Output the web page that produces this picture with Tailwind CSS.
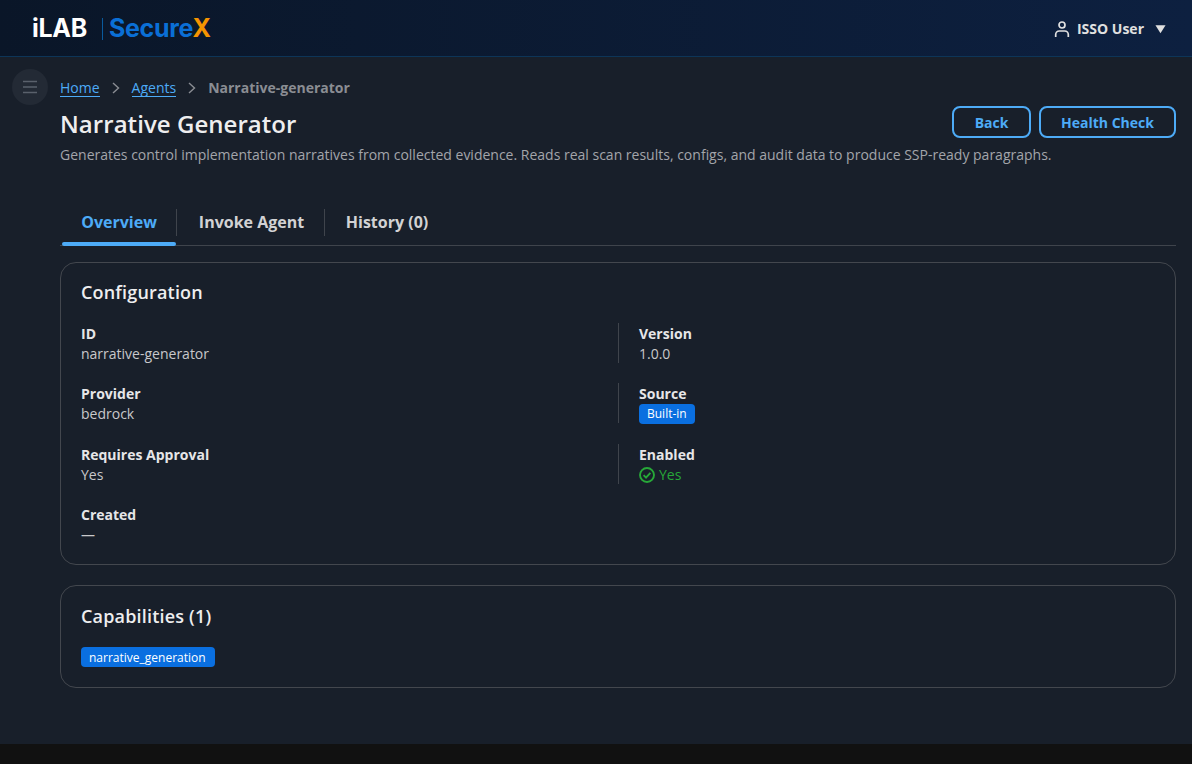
<!DOCTYPE html>
<html lang="en">
<head>
    <meta charset="UTF-8">
    <title>Narrative Generator</title>
    <script src="https://cdn.jsdelivr.net/npm/@tailwindcss/browser@4"></script>
</head>
<body class="relative h-[764px] w-[1192px] overflow-hidden bg-[#181f2a] font-['Open_Sans',sans-serif] text-sm text-[#e0e0e0]">
    <!-- Top bar -->
    <header class="flex h-[57px] items-center justify-between border-b border-[#0d3558] bg-gradient-to-r from-[#0a1628] to-[#0d2040] pl-8 pr-[26px] pt-[2px]">
        <div class="flex items-center font-['Inter',sans-serif] text-[25px] font-bold tracking-[-0.3px]">
            <span class="text-white">iLAB</span>
            <span class="ml-[15px] mr-[6px] h-[22px] w-px bg-[#0a5a9c]"></span>
            <span class="text-[#0a6fd6]">Secure<span class="text-[#f59400]">X</span></span>
        </div>
        <div class="flex items-center text-[#e0e0e0]">
            <svg class="h-[18px] w-[18px]" viewBox="0 0 18 18" fill="none" stroke="currentColor" stroke-width="1.7">
                <circle cx="9" cy="5" r="3"/>
                <path d="M2.7 17v-2.5a3.5 3.5 0 0 1 3.5-3.5h5.6a3.5 3.5 0 0 1 3.5 3.5V17"/>
            </svg>
            <span class="ml-[6px] font-bold">ISSO User</span>
            <svg class="ml-[11px] h-[10px] w-[11px]" viewBox="0 0 12 10" fill="currentColor"><path d="M0.5 1h11L6 9.5z"/></svg>
        </div>
    </header>

    <!-- Sidebar toggle -->
    <button class="absolute left-3 top-[69px] flex h-9 w-9 items-center justify-center rounded-full bg-[#232a35]">
        <svg class="h-4 w-4 text-[#5a616c]" viewBox="0 0 16 16" fill="none" stroke="currentColor" stroke-width="1.5">
            <path d="M1 2.5h14M1 8h14M1 13.5h14"/>
        </svg>
    </button>

    <main class="pl-[60px] pr-4">
        <nav class="mt-[20px] flex h-[21px] items-center">
            <a class="border-b border-[#4dabf7] leading-[17px] text-[#4dabf7]">Home</a>
            <svg class="mx-[12px] h-3 w-2 text-[#8a8d93]" viewBox="0 0 8 12" fill="none" stroke="currentColor" stroke-width="1.4"><path d="M1 1l5.5 5L1 11"/></svg>
            <a class="border-b border-[#4dabf7] leading-[17px] text-[#4dabf7]">Agents</a>
            <svg class="mx-[12px] h-3 w-2 text-[#8a8d93]" viewBox="0 0 8 12" fill="none" stroke="currentColor" stroke-width="1.4"><path d="M1 1l5.5 5L1 11"/></svg>
            <span class="font-bold text-[#8a8d93]">Narrative-generator</span>
        </nav>

        <div class="flex items-start justify-between">
            <h1 class="pt-[10px] text-2xl leading-[32px] font-semibold tracking-[0.05px] text-[#eeeeef]">Narrative Generator</h1>
            <div class="flex gap-2 pt-[8px]">
                <button class="h-8 w-[79px] rounded-lg border-2 border-[#4dabf7] pt-px font-bold text-[#4dabf7]">Back</button>
                <button class="h-8 w-[137px] rounded-lg border-2 border-[#4dabf7] pt-px font-bold text-[#4dabf7]">Health Check</button>
            </div>
        </div>
        <p class="mt-[5px] leading-5 text-[#a3a5aa]">Generates control implementation narratives from collected evidence. Reads real scan results, configs, and audit data to produce SSP-ready paragraphs.</p>

        <!-- Tabs -->
        <div class="mt-[36px] flex h-[45px] items-stretch border-b border-[#3f444c] text-base font-bold">
            <div class="relative ml-[2px] flex w-[114px] items-center justify-center pb-[2px] text-[#4dabf7]">
                Overview
                <span class="absolute -bottom-px left-0 right-0 h-[4px] rounded-full bg-[#4dabf7]"></span>
            </div>
            <div class="mb-[9px] mt-[8px] w-px bg-[#3f444c]"></div>
            <div class="flex w-[147px] items-center justify-center pb-[2px] pl-[2px] text-[#d2d2d4]">Invoke Agent</div>
            <div class="mb-[9px] mt-[8px] w-px bg-[#3f444c]"></div>
            <div class="flex w-[125px] items-center justify-center pb-[2px] pr-px text-[#d2d2d4]">History (0)</div>
        </div>

        <!-- Configuration -->
        <section class="mt-4 h-[303px] rounded-2xl border border-[#43474e] px-5 pt-[16px]">
            <h2 class="text-lg leading-[26px] font-semibold tracking-[0.18px] text-[#eeeeef]">Configuration</h2>
            <dl class="mt-[18px] grid grid-cols-2 gap-y-[20.4px]">
                <div class="h-10">
                    <dt class="h-5 leading-[22px] font-bold text-[#e6e6e8]">ID</dt>
                    <dd class="h-5 leading-[22px] text-[#c8c8ca]">narrative-generator</dd>
                </div>
                <div class="h-10 border-l border-[#3f444c] pl-5">
                    <dt class="h-5 leading-[22px] font-bold text-[#e6e6e8]">Version</dt>
                    <dd class="h-5 leading-[22px] text-[#c8c8ca]">1.0.0</dd>
                </div>
                <div class="h-10">
                    <dt class="h-5 leading-[22px] font-bold text-[#e6e6e8]">Provider</dt>
                    <dd class="h-5 leading-[22px] text-[#c8c8ca]">bedrock</dd>
                </div>
                <div class="h-10 border-l border-[#3f444c] pl-5">
                    <dt class="h-5 leading-[22px] font-bold text-[#e6e6e8]">Source</dt>
                    <dd class="pt-px"><span class="flex h-5 w-fit items-center rounded-[4px] bg-[#0a6fe0] px-2 text-xs text-white">Built-in</span></dd>
                </div>
                <div class="h-10">
                    <dt class="h-5 leading-[22px] font-bold text-[#e6e6e8]">Requires Approval</dt>
                    <dd class="h-5 leading-[22px] text-[#c8c8ca]">Yes</dd>
                </div>
                <div class="h-10 border-l border-[#3f444c] pl-5">
                    <dt class="h-5 leading-[22px] font-bold text-[#e6e6e8]">Enabled</dt>
                    <dd class="flex h-5 items-center gap-1 pt-[2px] text-[#27a838]">
                        <svg class="h-4 w-4" viewBox="0 0 16 16" fill="none" stroke="currentColor" stroke-width="1.9">
                            <circle cx="8" cy="8" r="7"/>
                            <path d="M4.6 8.2l2.4 2.4 4.4-4.8"/>
                        </svg>
                        Yes
                    </dd>
                </div>
                <div class="h-10">
                    <dt class="h-5 leading-[22px] font-bold text-[#e6e6e8]">Created</dt>
                    <dd class="h-5 leading-[22px] text-[#c8c8ca]">—</dd>
                </div>
            </dl>
        </section>

        <!-- Capabilities -->
        <section class="mt-5 h-[103px] rounded-2xl border border-[#43474e] px-5 pt-[17px]">
            <h2 class="text-lg leading-[26px] font-semibold tracking-[0.18px] text-[#eeeeef]">Capabilities (1)</h2>
            <span class="mt-[18px] flex h-5 w-[134px] items-center rounded-[4px] bg-[#0a6fe0] pl-2 pt-px text-xs text-white">narrative_generation</span>
        </section>
    </main>

    <footer class="absolute bottom-0 left-0 right-0 h-5 bg-[#111111]"></footer>
</body>
</html>
